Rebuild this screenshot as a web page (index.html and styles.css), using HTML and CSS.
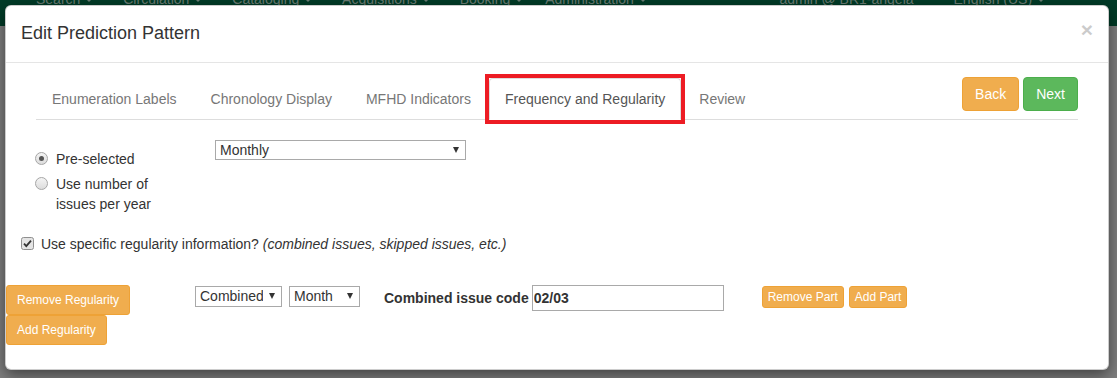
FILE: index.html
```html
<!DOCTYPE html>
<html lang="en">
<head>
    <meta charset="UTF-8">
    <meta name="viewport" content="width=device-width, initial-scale=1.0">
    <title>Edit Prediction Pattern</title>
    <link rel="stylesheet" href="styles.css">
</head>
<body>
    <div class="navbar">
        <ul class="nav-menu">
            <li>Search <span class="caret"></span></li>
            <li>Circulation <span class="caret"></span></li>
            <li>Cataloging <span class="caret"></span></li>
            <li>Acquisitions <span class="caret"></span></li>
            <li>Booking <span class="caret"></span></li>
            <li class="nav-admin">Administration <span class="caret"></span></li>
        </ul>
        <ul class="nav-menu nav-right">
            <li>admin @ BR1-angela</li>
            <li>English (US) <span class="caret"></span></li>
        </ul>
    </div>

    <div class="modal">
        <div class="modal-header">
            <h4 class="modal-title">Edit Prediction Pattern</h4>
            <button class="close">&times;</button>
        </div>

        <div class="modal-body">
            <div class="tab-bar">
                <ul class="tabs">
                    <li><a>Enumeration Labels</a></li>
                    <li><a>Chronology Display</a></li>
                    <li><a>MFHD Indicators</a></li>
                    <li class="active"><a>Frequency and Regularity<span class="highlight"></span></a></li>
                    <li><a>Review</a></li>
                </ul>
                <div class="tab-actions">
                    <button class="btn btn-warning">Back</button>
                    <button class="btn btn-success">Next</button>
                </div>
            </div>

            <div class="frequency">
                <div class="freq-options">
                    <label class="radio">
                        <span class="radio-icon checked"></span>
                        <span>Pre-selected</span>
                    </label>
                    <label class="radio">
                        <span class="radio-icon"></span>
                        <span>Use number of issues per year</span>
                    </label>
                </div>
                <div class="select select-wide">
                    <select><option>Monthly</option></select>
                </div>
            </div>

            <label class="checkbox">
                <svg width="13" height="13" viewBox="0 0 13 13">
                    <rect x="0.5" y="0.5" width="12" height="12" rx="2" fill="#e4e4e4" stroke="#8f8f8f"/>
                    <path d="M3 6.7 L5.3 9.1 L10 3.6" fill="none" stroke="#333" stroke-width="1.8"/>
                </svg>
                <span>Use specific regularity information? <em>(combined issues, skipped issues, etc.)</em></span>
            </label>

            <div class="regularity">
                <div class="reg-actions">
                    <button class="btn btn-warning btn-sm">Remove Regularity</button>
                    <button class="btn btn-warning btn-sm">Add Regularity</button>
                </div>
                <div class="reg-part">
                    <div class="select select-combined">
                        <select><option>Combined</option></select>
                    </div>
                    <div class="select select-month">
                        <select><option>Month</option></select>
                    </div>
                    <label class="code-label">Combined issue code</label>
                    <input class="code-input" type="text" value="02/03">
                    <div class="part-actions">
                        <button class="btn btn-warning btn-xs">Remove Part</button>
                        <button class="btn btn-warning btn-xs">Add Part</button>
                    </div>
                </div>
            </div>
        </div>
    </div>
</body>
</html>
```

FILE: styles.css
```css
* {
    margin: 0;
    padding: 0;
    box-sizing: border-box;
}

body {
    font-family: "Liberation Sans", Arial, sans-serif;
    font-size: 14px;
    line-height: 1.42857;
    color: #333;
    background: #7f7f7f;
    min-height: 100vh;
    overflow: hidden;
}

/* dimmed page behind the dialog */
.navbar {
    display: flex;
    height: 26px;
    padding: 0 57px 0 21px;
    background: #013b27;
    overflow: hidden;
}

.nav-menu {
    display: flex;
    list-style: none;
    margin-top: -11px;
    line-height: 20px;
    color: #6b7d74;
}

.nav-menu li {
    padding: 0 15px;
    white-space: nowrap;
}

.nav-menu .nav-admin {
    margin-left: -8px;
}

.nav-right {
    margin-left: auto;
}

.nav-right li + li {
    margin-left: 10px;
}

.caret {
    display: inline-block;
    width: 0;
    height: 0;
    margin-left: 1px;
    vertical-align: middle;
    border-top: 4px solid;
    border-left: 4px solid transparent;
    border-right: 4px solid transparent;
}

/* dialog */
.modal {
    position: absolute;
    top: 5px;
    left: 5px;
    width: 1104px;
    background: #fff;
    border: 1px solid rgba(0, 0, 0, 0.2);
    border-radius: 6px;
    box-shadow: 0 5px 15px rgba(0, 0, 0, 0.5);
}

.modal-header {
    display: flex;
    justify-content: space-between;
    align-items: flex-start;
    padding: 15px;
    border-bottom: 1px solid #e5e5e5;
}

.modal-title {
    font-size: 18px;
    font-weight: 500;
    line-height: 1.42857;
}

.close {
    margin-top: -2px;
    font-family: inherit;
    font-size: 21px;
    font-weight: bold;
    line-height: 1;
    color: #000;
    opacity: 0.2;
    background: none;
    border: none;
    cursor: pointer;
}

.modal-body {
    padding: 15px;
}

.tab-bar {
    display: flex;
    justify-content: space-between;
    align-items: flex-start;
    margin: 0 15px;
    border-bottom: 1px solid #ddd;
}

.tabs {
    display: flex;
    list-style: none;
    margin-bottom: -1px;
}

.tabs li {
    margin-right: 2px;
}

.tabs a {
    position: relative;
    display: block;
    padding: 10px 15px;
    line-height: 20px;
    color: #777;
    border: 1px solid transparent;
    border-radius: 4px 4px 0 0;
    cursor: pointer;
}

.tabs .active a {
    color: #555;
    background: #fff;
    border-color: #ddd #ddd transparent;
}

/* red annotation box around the current step */
.highlight {
    position: absolute;
    top: -5px;
    bottom: -5px;
    left: -5px;
    right: -5px;
    border: 4px solid #ed1c24;
}

.tab-actions {
    display: flex;
    gap: 4px;
    margin-top: -1px;
}

.btn {
    font-family: inherit;
    font-size: 14px;
    line-height: 20px;
    padding: 6px 12px;
    color: #fff;
    border: 1px solid transparent;
    border-radius: 4px;
    white-space: nowrap;
    cursor: pointer;
}

.btn-warning {
    background: #f0ad4e;
    border-color: #eea236;
}

.btn-success {
    background: #5cb85c;
    border-color: #4cae4c;
}

.btn-sm {
    font-size: 12px;
    line-height: 18px;
    padding: 5px 10px;
    border-radius: 3px;
}

.btn-xs {
    font-size: 12px;
    line-height: 18px;
    padding: 1px 5px;
    border-radius: 3px;
}

/* frequency */
.frequency {
    display: flex;
    align-items: flex-start;
    gap: 30px;
    margin-top: 20px;
    padding-left: 14px;
}

.freq-options {
    width: 150px;
}

.radio {
    display: flex;
    align-items: flex-start;
    gap: 8px;
    margin: 9px 0 10px;
    line-height: 20px;
}

.radio + .radio {
    margin-top: -5px;
}

.radio-icon {
    flex: none;
    display: flex;
    align-items: center;
    justify-content: center;
    width: 13px;
    height: 13px;
    margin-top: 3px;
    border: 1px solid #a6a6a6;
    border-radius: 50%;
    background: linear-gradient(#f4f4f4, #dcdcdc);
}

.radio-icon.checked::after {
    content: "";
    width: 5px;
    height: 5px;
    border-radius: 50%;
    background: #555;
}

.select {
    position: relative;
    display: inline-block;
}

.select select {
    display: block;
    appearance: none;
    -webkit-appearance: none;
    height: 20px;
    padding: 0 18px 0 4px;
    font-family: inherit;
    font-size: 14px;
    line-height: 18px;
    color: #333;
    background: #fff;
    border: 1px solid #a9a9a9;
    border-radius: 0;
}

.select::after {
    content: "";
    position: absolute;
    top: 50%;
    right: 7px;
    margin-top: -3px;
    border-top: 6px solid #333;
    border-left: 3.5px solid transparent;
    border-right: 3.5px solid transparent;
    pointer-events: none;
}

.select-wide select {
    width: 251px;
}

.checkbox {
    display: flex;
    align-items: center;
    gap: 7px;
    margin-top: 10px;
    line-height: 20px;
}

.checkbox svg {
    flex: none;
}

/* regularity */
.regularity {
    display: flex;
    align-items: flex-start;
    margin: 31px -15px 9px;
}

.reg-actions {
    display: flex;
    flex-direction: column;
    align-items: flex-start;
    width: 189px;
}

.reg-part {
    display: flex;
    align-items: flex-start;
}

.select-combined,
.select-month {
    margin-top: 1px;
}

.select-combined select,
.select-month select {
    height: 21px;
}

.select-combined select {
    width: 87px;
}

.select-month {
    margin-left: 7px;
}

.select-month select {
    width: 71px;
}

.code-label {
    margin: 0 3px 0 24px;
    font-weight: bold;
    line-height: 26px;
}

.code-input {
    width: 192px;
    height: 26px;
    padding: 0 1px;
    font-family: inherit;
    font-size: 14px;
    font-weight: bold;
    color: #333;
    border: 1px solid #a9a9a9;
}

.part-actions {
    display: flex;
    gap: 5px;
    margin: 1px 0 0 38px;
}
```
